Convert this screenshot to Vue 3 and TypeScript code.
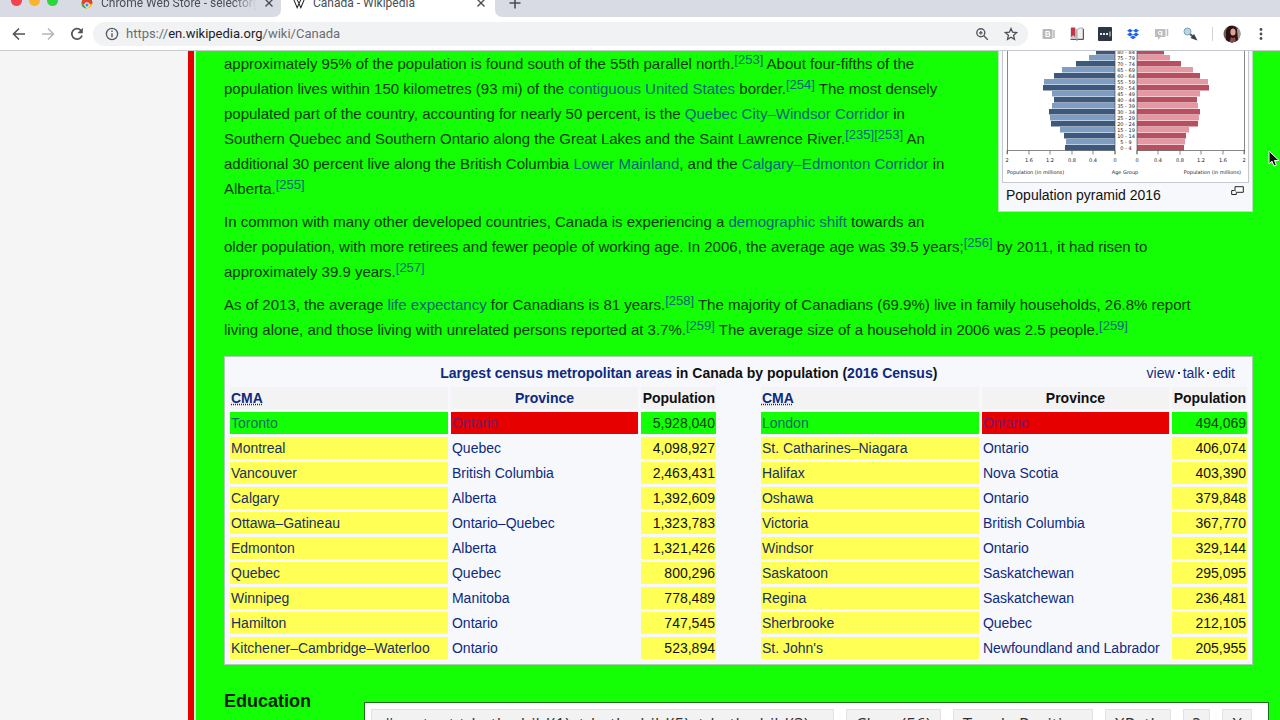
<script setup lang="ts">
import { ref } from 'vue'

interface Area {
  name: string
  province: string
  population: string
  state: 'match' | 'suggest'
}

const left: string[][] = [
  ['Toronto', 'Ontario', '5,928,040'],
  ['Montreal', 'Quebec', '4,098,927'],
  ['Vancouver', 'British Columbia', '2,463,431'],
  ['Calgary', 'Alberta', '1,392,609'],
  ['Ottawa–Gatineau', 'Ontario–Quebec', '1,323,783'],
  ['Edmonton', 'Alberta', '1,321,426'],
  ['Quebec', 'Quebec', '800,296'],
  ['Winnipeg', 'Manitoba', '778,489'],
  ['Hamilton', 'Ontario', '747,545'],
  ['Kitchener–Cambridge–Waterloo', 'Ontario', '523,894'],
]
const right: string[][] = [
  ['London', 'Ontario', '494,069'],
  ['St. Catharines–Niagara', 'Ontario', '406,074'],
  ['Halifax', 'Nova Scotia', '403,390'],
  ['Oshawa', 'Ontario', '379,848'],
  ['Victoria', 'British Columbia', '367,770'],
  ['Windsor', 'Ontario', '329,144'],
  ['Saskatoon', 'Saskatchewan', '295,095'],
  ['Regina', 'Saskatchewan', '236,481'],
  ['Sherbrooke', 'Quebec', '212,105'],
  ["St. John's", 'Newfoundland and Labrador', '205,955'],
]

const toArea = (r: string[], i: number): Area => ({
  name: r[0],
  province: r[1],
  population: r[2],
  state: i === 0 ? 'match' : 'suggest',
})
const rows = left.map((l, i) => ({ a: toArea(l, i), b: toArea(right[i], i), first: i === 0 }))

const selector = ref('#content td:nth-child(1), td:nth-child(5), td:nth-child(3)')

// Bar lengths per age group, youngest first
const maleLen = [50, 49, 51, 55, 64, 65, 66, 63, 61, 63, 72, 71, 61, 53, 39, 26, 19]
const femaleLen = [47, 48, 49, 52, 61, 62, 63, 61, 60, 63, 72, 71, 63, 56, 44, 33, 27]
const ages = ['0 - 4', '5 - 9', '10 - 14', '15 - 19', '20 - 24', '25 - 29', '30 - 34', '35 - 39', '40 - 44', '45 - 49', '50 - 54', '55 - 59', '60 - 64', '65 - 69', '70 - 74', '75 - 79', '80 - 84']
const bars = ages.map((label, i) => ({
  label,
  y: 94 - i * 6,
  m: maleLen[i],
  f: femaleLen[i],
  mc: i % 2 ? '#7f9dc3' : '#3d587d',
  fc: i % 2 ? '#e598a4' : '#b84f5f',
}))
const ticks = [
  [4, '2'], [26, '1.6'], [47, '1.2'], [69, '0.8'], [90, '0.4'], [112, '0'],
  [134, '0'], [155, '0.4'], [177, '0.8'], [198, '1.2'], [220, '1.6'], [241, '2'],
] as [number, string][]
</script>

<template>
  <div class="window">
    <header class="chrome">
      <div class="tabs">
        <div class="tab-side tab-left">
          <span class="light red"></span><span class="light amber"></span><span class="light lime"></span>
          <svg class="fav" width="12" height="12" viewBox="0 0 12 12">
            <circle cx="6" cy="6" r="5.5" fill="#fbc116" />
            <path d="M6 6 1 3.5A5.5 5.5 0 0 1 11.2 4.5Z" fill="#e33b2e" />
            <path d="M0.500 6.500A5.500 5.500 0 0 1 11.500 6.500L8.500 7.500A2.500 2.500 0 0 0 3.500 7.500Z" fill="#dc4437" />
            <path d="M0.500 6.500 4 8.500 5.500 11.500A5.500 5.500 0 0 1 0.500 6.500Z" fill="#2da94f" />
            <circle cx="6" cy="8" r="2.200" fill="#4a8af4" stroke="#fff" />
          </svg>
          <span class="tab-title fade">Chrome Web Store - selectorg</span>
          <button class="tab-x" aria-label="Close tab">
            <svg width="8" height="8" viewBox="0 0 8 8"><path d="M0.500 0.500 7.500 7.500M7.500 0.500 0.500 7.500" stroke="#4a4d51" stroke-width="1.400" /></svg>
          </button>
        </div>
        <div class="tab-active">
          <svg class="wiki" width="12" height="12" viewBox="0 0 13 12">
            <path d="M0.500 1.500 4.500 11 6.500 6.500 8.500 11 12.500 1.500M4 1.500 6.500 6.500 9 1.500" fill="none" stroke="#222" stroke-width="1.100" />
          </svg>
          <span class="tab-title">Canada - Wikipedia</span>
          <button class="tab-x" aria-label="Close tab">
            <svg width="8" height="8" viewBox="0 0 8 8"><path d="M0.500 0.500 7.500 7.500M7.500 0.500 0.500 7.500" stroke="#4a4d51" stroke-width="1.400" /></svg>
          </button>
        </div>
        <div class="tab-side tab-right">
          <button class="tab-x" aria-label="New tab">
            <svg width="12" height="12" viewBox="0 0 12 12"><path d="M6 0.500v11M0.500 6h11" stroke="#4a4d51" stroke-width="1.600" /></svg>
          </button>
        </div>
      </div>
      <div class="toolbar">
        <button class="ic" aria-label="Back">
          <svg width="14" height="14" viewBox="0 0 14 14"><path d="M13 7H2M7 1.500 1.500 7 7 12.500" fill="none" stroke="#4f5256" stroke-width="1.600" /></svg>
        </button>
        <button class="ic" aria-label="Forward">
          <svg width="14" height="14" viewBox="0 0 14 14"><path d="M1 7h11M7 1.500 12.500 7 7 12.500" fill="none" stroke="#b5b7ba" stroke-width="1.600" /></svg>
        </button>
        <button class="ic" aria-label="Reload">
          <svg width="14" height="14" viewBox="0 0 14 14">
            <path d="M12 8.500A5.200 5.200 0 1 1 10.800 3.300" fill="none" stroke="#4f5256" stroke-width="1.700" />
            <path d="M12.800 0.800v5.400H7.400Z" fill="#4f5256" />
          </svg>
        </button>
        <div class="omnibox">
          <svg width="14" height="14" viewBox="0 0 14 14">
            <circle cx="7" cy="7" r="5.600" fill="none" stroke="#55585c" stroke-width="1.300" />
            <path d="M7 6.200v4M7 3.600v1.400" stroke="#55585c" stroke-width="1.400" />
          </svg>
          <span class="url">https://<b>en.wikipedia.org</b>/wiki/Canada</span>
          <svg class="mag" width="14" height="14" viewBox="0 0 14 14">
            <circle cx="5.800" cy="5.800" r="4" fill="none" stroke="#55585c" stroke-width="1.400" />
            <path d="M8.800 8.800 12.800 12.800M5.800 4v3.600M4 5.800h3.600" stroke="#55585c" stroke-width="1.300" />
          </svg>
          <svg width="14" height="14" viewBox="0 0 14 14">
            <path d="M7 1.500 8.600 5.200 12.700 5.600 9.600 8.300 10.500 12.300 7 10.200 3.500 12.300 4.400 8.300 1.300 5.600 5.400 5.200Z" fill="none" stroke="#4f5256" stroke-width="1.300" />
          </svg>
        </div>
        <div class="exts">
          <svg width="14" height="14" viewBox="0 0 14 14">
            <rect x="0.500" y="2" width="10" height="10" rx="1" fill="#b9b9b9" />
            <path d="M12 3v8" stroke="#b9b9b9" stroke-width="1.500" />
            <path d="M4 4.500h2.200a1.200 1.200 0 0 1 0 2.500H4zM4 7h2.600a1.200 1.200 0 0 1 0 2.500H4z" fill="none" stroke="#fff" stroke-width="1.100" />
          </svg>
          <svg width="14" height="14" viewBox="0 0 14 14">
            <path d="M0.500 1H5l2 1.500V12H0.500z" fill="#c9c9cc" />
            <path d="M1 0.500h4.200v9.500L3.100 8.200 1 10z" fill="#c63445" />
            <path d="M7 2.500l3-1.500h3v11H7z" fill="#f1efe9" stroke="#8a8d90" stroke-width="0.700" />
            <path d="M0.500 12.500h5.500l1 0.700 1-0.700h5.500V2" stroke="#4d5a68" fill="none" />
          </svg>
          <svg width="14" height="14" viewBox="0 0 14 14">
            <rect width="14" height="14" rx="1" fill="#2c3640" />
            <path d="M2 6h2v2H2zM5 6h2v2H5zM8 6h2v2H8zM11.500 4.500h1v5h-1z" fill="#e8eaec" />
          </svg>
          <svg width="14" height="14" viewBox="0 0 14 14">
            <path d="M4 1.800 7 3.700 4 5.600 1 3.700ZM10 1.800 13 3.700 10 5.600 7 3.700ZM4 5.600 7 7.500 4 9.400 1 7.500ZM10 5.600 13 7.500 10 9.400 7 7.500ZM7 8.500 10 10.300 7 12.200 4 10.300Z" fill="#1a66f0" />
          </svg>
          <svg width="15" height="14" viewBox="0 0 15 14">
            <path d="M1 2h10.500v8H6.500L4 13v-3H1z" fill="#bdbdbd" />
            <path d="M13.500 2v7" stroke="#bdbdbd" stroke-width="1.500" />
            <circle cx="6" cy="5.800" r="1.600" fill="none" stroke="#fff" /><path d="M7.800 4v5" stroke="#fff" />
          </svg>
          <svg width="15" height="14" viewBox="0 0 15 14">
            <path d="M6.500 6.500 12 11.500" stroke="#4b5a66" stroke-width="2" />
            <circle cx="4.500" cy="4.500" r="3.500" fill="#a9dcf2" stroke="#8a9aa5" />
            <path d="M7.500 11 11 7l3.500 6.500-3-1z" fill="#35424d" />
          </svg>
        </div>
        <span class="sep"></span>
        <svg class="avatar" width="18" height="18" viewBox="0 0 18 18">
          <clipPath id="av"><circle cx="9" cy="9" r="8.500" /></clipPath>
          <g clip-path="url(#av)">
            <rect width="18" height="18" fill="#6e5a55" />
            <path d="M3 18V6Q5 0 10 1q5 1 5 8v9z" fill="#2a1114" />
            <ellipse cx="10" cy="7" rx="2.600" ry="3.600" fill="#d9a494" />
            <path d="M8 12q2 2 4 0l1 6H6z" fill="#8c4a48" />
            <path d="M14 4h4v12h-3z" fill="#a79c98" />
          </g>
        </svg>
        <button class="ic kebab" aria-label="Menu">
          <svg width="4" height="14" viewBox="0 0 4 14"><circle cx="2" cy="2.500" r="1.400" fill="#4a4d51" /><circle cx="2" cy="7" r="1.400" fill="#4a4d51" /><circle cx="2" cy="11.500" r="1.400" fill="#4a4d51" /></svg>
        </button>
      </div>
    </header>

    <div class="page">
      <aside class="gutter"></aside>
      <main class="content">
        <figure class="thumb">
          <svg class="chart" viewBox="0 0 245 131" role="img" aria-label="Population pyramid">
            <g v-for="b in bars" :key="b.label">
              <rect :x="112 - b.m" :y="b.y" :width="b.m" height="5.500" :fill="b.mc" />
              <rect x="134" :y="b.y" :width="b.f" height="5.500" :fill="b.fc" />
              <text x="123" :y="b.y + 5" text-anchor="middle" class="age">{{ b.label }}</text>
            </g>
            <path d="M4.500 0v103M4 99.500h108M112 0v103M134 0v103M134 99.500h108M241.500 0v103" fill="none" stroke="#555" stroke-width="0.700" />
            <g v-for="(t, i) in ticks" :key="i">
              <path :d="`M${t[0]} 99.500v4`" stroke="#555" stroke-width="0.700" />
              <text :x="t[0]" y="111" text-anchor="middle" class="age">{{ t[1] }}</text>
            </g>
            <text x="4" y="123" class="age">Population (in millions)</text>
            <text x="122" y="123" text-anchor="middle" class="age">Age Group</text>
            <text x="238" y="123" text-anchor="end" class="age">Population (in millions)</text>
          </svg>
          <figcaption>
            <span>Population pyramid 2016</span>
            <svg width="13" height="11" viewBox="0 0 13 11">
              <path d="M4 0.700h8.300v5.600H4z" fill="#fff" stroke="#222" />
              <path d="M3.500 4.500H0.700v4h4.600V6.500" fill="#fff" stroke="#222" />
            </svg>
          </figcaption>
        </figure>

        <p>
          approximately 95% of the population is found south of the 55th parallel north.<sup><a href="#">[253]</a></sup> About four-fifths of the<br />
          population lives within 150 kilometres (93 mi) of the <a href="#">contiguous United States</a> border.<sup><a href="#">[254]</a></sup> The most densely<br />
          populated part of the country, accounting for nearly 50 percent, is the <a href="#">Quebec City–Windsor Corridor</a> in<br />
          Southern Quebec and Southern Ontario along the Great Lakes and the Saint Lawrence River.<sup><a href="#">[235]</a><a href="#">[253]</a></sup> An<br />
          additional 30 percent live along the British Columbia <a href="#">Lower Mainland</a>, and the <a href="#">Calgary–Edmonton Corridor</a> in<br />
          Alberta.<sup><a href="#">[255]</a></sup>
        </p>
        <p>
          In common with many other developed countries, Canada is experiencing a <a href="#">demographic shift</a> towards an<br />
          older population, with more retirees and fewer people of working age. In 2006, the average age was 39.5 years;<sup><a href="#">[256]</a></sup> by 2011, it had risen to<br />
          approximately 39.9 years.<sup><a href="#">[257]</a></sup>
        </p>
        <p>
          As of 2013, the average <a href="#">life expectancy</a> for Canadians is 81 years.<sup><a href="#">[258]</a></sup> The majority of Canadians (69.9%) live in family households, 26.8% report<br />
          living alone, and those living with unrelated persons reported at 3.7%.<sup><a href="#">[259]</a></sup> The average size of a household in 2006 was 2.5 people.<sup><a href="#">[259]</a></sup>
        </p>

        <div class="box">
          <table>
            <colgroup>
              <col /><col class="prov" /><col class="num" /><col class="gap" /><col /><col class="prov" /><col class="num" />
            </colgroup>
            <thead>
              <tr>
                <th colspan="7" class="title">
                  <div class="title-row">
                    <span class="name"><a href="#">Largest census metropolitan areas</a> in Canada by population (<a href="#">2016 Census</a>)</span>
                    <span class="nav"><a href="#">view</a><i></i><a href="#">talk</a><i></i><a href="#">edit</a></span>
                  </div>
                </th>
              </tr>
              <tr class="heads">
                <th class="l"><a href="#"><abbr>CMA</abbr></a></th>
                <th><a href="#">Province</a></th>
                <th class="r">Population</th>
                <td></td>
                <th class="l"><a href="#"><abbr>CMA</abbr></a></th>
                <th>Province</th>
                <th class="r">Population</th>
              </tr>
            </thead>
            <tbody>
              <tr v-for="r in rows" :key="r.a.name">
                <td :class="r.a.state"><a href="#">{{ r.a.name }}</a></td>
                <td :class="{ reject: r.first }"><a href="#">{{ r.a.province }}</a></td>
                <td class="r" :class="r.a.state">{{ r.a.population }}</td>
                <td></td>
                <td :class="r.b.state"><a href="#">{{ r.b.name }}</a></td>
                <td :class="{ reject: r.first }"><a href="#">{{ r.b.province }}</a></td>
                <td class="r" :class="r.b.state">{{ r.b.population }}</td>
              </tr>
            </tbody>
          </table>
        </div>

        <h3>Education</h3>
      </main>
    </div>

    <div class="gadget">
      <input v-model="selector" type="text" aria-label="CSS selector" />
      <button>Clear (56)</button>
      <button>Toggle Position</button>
      <button>XPath</button>
      <button>?</button>
      <button>X</button>
    </div>

    <svg class="cursor" width="14" height="18" viewBox="0 0 14 18">
      <path d="M1 1v13l3-2.800L6 16l2.400-1L6.500 10.500H11Z" fill="#111" stroke="#fff" stroke-width="1" />
    </svg>
  </div>
</template>

<style>
body {
  margin: 0;
  overflow: hidden;
}
</style>

<style scoped>
.window {
  position: relative;
  height: 100vh;
  overflow: hidden;
  display: flex;
  flex-direction: column;
  font-family: "Liberation Sans", Arial, sans-serif;
  background: #14ff05;
}
button {
  border: 0;
  padding: 0;
  background: none;
  display: flex;
  align-items: center;
  justify-content: center;
}
a {
  text-decoration: none;
}
.chrome {
  flex: none;
  background: #fff;
  font-family: Roboto, sans-serif;
  border-bottom: 1px solid #c9cbce;
}
.tabs {
  height: 17px;
  display: flex;
  align-items: flex-end;
  overflow: hidden;
}
.tab-side,
.tab-active {
  height: 28px;
  flex: none;
  display: flex;
  align-items: center;
}
.tab-side {
  background: #d8dbe3;
}
.tab-left {
  width: 281px;
  padding-left: 11px;
  box-sizing: border-box;
  border-bottom-right-radius: 7px;
}
.tab-active {
  width: 214px;
  padding-left: 12px;
  box-sizing: border-box;
}
.tab-right {
  flex: 1;
  padding-left: 14px;
  border-bottom-left-radius: 7px;
}
.light {
  width: 11px;
  height: 11px;
  border-radius: 50%;
  margin-right: 7px;
  margin-bottom: 6px;
}
.red { background: #f6424f; }
.amber { background: #fbb52c; }
.lime { background: #2bd63f; }
.fav {
  margin: 0 8px 0 16px;
}
.wiki {
  margin-right: 8px;
}
.tab-title {
  width: 156px;
  font-size: 12px;
  line-height: 28px;
  color: #4a4d52;
  white-space: nowrap;
}
.fade {
  -webkit-mask-image: linear-gradient(90deg, #000 84%, transparent);
  mask-image: linear-gradient(90deg, #000 84%, transparent);
}
.tab-x {
  margin-left: 8px;
}
.tab-right .tab-x {
  margin-left: 0;
}
.toolbar {
  height: 33px;
  display: flex;
  align-items: center;
  padding: 0 17px 0 12px;
}
.ic {
  width: 14px;
  height: 14px;
  margin-right: 15px;
}
.omnibox {
  flex: 1;
  height: 24px;
  margin-left: -6px;
  border-radius: 12px;
  background: #f1f2f4;
  display: flex;
  align-items: center;
  padding: 0 10px 0 12px;
  margin-right: 14px;
}
.url {
  flex: 1;
  margin-left: 7px;
  font-size: 13px;
  color: #6a6d71;
}
.url b {
  font-weight: 400;
  color: #1b1c1e;
}
.mag {
  margin-right: 15px;
}
.exts {
  display: flex;
  gap: 14px;
}
.sep {
  width: 1px;
  height: 14px;
  margin: 0 10px 0 14px;
  background: #d0d2d5;
}
.kebab {
  width: 4px;
  margin: 0 0 0 18px;
}

.page {
  flex: 1;
  min-height: 0;
  display: flex;
}
.gutter {
  flex: none;
  width: 188px;
  background: #f5f5f5;
  border-right: 6px solid #e60000;
}
.content {
  flex: 1;
  min-width: 0;
  margin-left: 2px;
  padding: 0 27px 0 28px;
  background: #14ff05;
  box-shadow: -2px 0 0 #c9f5c6;
}
.thumb {
  float: right;
  margin: 0;
  width: 245px;
  padding: 0 4px;
  border: 1px solid #b9e0b9;
  border-top: 0;
  background: #f7f8fb;
}
.chart {
  display: block;
  width: 100%;
  background: #fff;
  box-shadow: 0 0 0 1px #c5c9cf;
}
.age {
  font-family: "DejaVu Sans", sans-serif;
  font-size: 5px;
  fill: #222;
}
figcaption {
  display: flex;
  justify-content: space-between;
  align-items: flex-start;
  padding: 4px 4px 6px 3px;
  font-size: 14px;
  line-height: 19px;
  color: #111;
}
p {
  margin: 0 0 8px;
  font-size: 15px;
  line-height: 25px;
  color: #063a06;
  white-space: nowrap;
}
p a {
  color: #08647a;
}
sup {
  font-size: 13px;
  line-height: 1;
  vertical-align: 5px;
}
.box {
  margin-top: 14px;
  padding: 2px;
  border: 1px solid #b4c8b8;
  background: #f7f8fb;
}
table {
  width: 100%;
  table-layout: fixed;
  border-collapse: separate;
  border-spacing: 3px;
  font-size: 14px;
  line-height: 20px;
  color: #101010;
}
.prov { width: 187px; }
.num { width: 75px; }
.gap { width: 39px; }
td,
th {
  padding: 1px;
  height: 20px;
  text-align: left;
  white-space: nowrap;
}
th {
  text-align: center;
}
table a {
  color: #0c2a80;
}
.heads th {
  background: #f3f3f4;
}
th.l { text-align: left; }
.r,
th.r { text-align: right; }
abbr {
  text-decoration: underline dotted;
}
.title-row {
  display: flex;
}
.name {
  flex: 1;
}
.nav {
  display: flex;
  align-items: center;
  padding-right: 11px;
  font-weight: 400;
}
.nav i {
  width: 2px;
  height: 2px;
  margin: 0 3px;
  background: #222;
}
.suggest { background: #ffff55; }
.suggest a { color: #17305f; }
.match {
  background: #14ff05;
  color: #07400a;
}
.match a { color: #0a6a62; }
.reject { background: #e60000; }
.reject a { color: #7a1a6a; }
h3 {
  margin: 24px 0 0;
  font-size: 18px;
  line-height: 24px;
  color: #031f03;
}
.gadget {
  position: absolute;
  left: 364px;
  right: 11px;
  top: 702px;
  box-sizing: border-box;
  border: 1px solid #1d6b1d;
  padding: 6px 16px 6px 6px;
  background: #fff;
  display: flex;
  gap: 12px;
}
.gadget input,
.gadget button {
  box-sizing: border-box;
  height: 28px;
  border: 1px solid #e2e2e2;
  background: #f2f2f2;
  font-family: "Open Sans", sans-serif;
  font-size: 17px;
  color: #333;
}
.gadget input {
  flex: 1;
  min-width: 0;
  padding: 0 11px;
}
.gadget button {
  padding: 0 9px;
}
.cursor {
  position: absolute;
  right: -2px;
  top: 150px;
}
</style>
